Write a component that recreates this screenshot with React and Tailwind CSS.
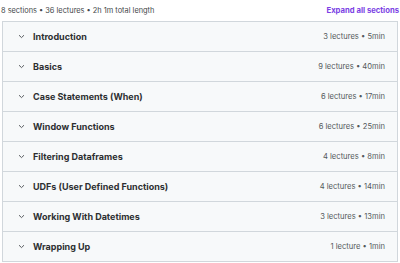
import React from "react";

const sections = [
  ["Introduction", "3 lectures • 5min"],
  ["Basics", "9 lectures • 40min"],
  ["Case Statements (When)", "6 lectures • 17min"],
  ["Window Functions", "6 lectures • 25min"],
  ["Filtering Dataframes", "4 lectures • 8min"],
  ["UDFs (User Defined Functions)", "4 lectures • 14min"],
  ["Working With Datetimes", "3 lectures • 13min"],
  ["Wrapping Up", "1 lecture • 1min"],
];

function Chevron() {
  return (
    <svg width="7" height="5" viewBox="0 0 7 5" fill="none" className="shrink-0">
      <path d="M1 1.2 L3.5 3.6 L6 1.2" stroke="#4a4d50" strokeWidth="0.9" />
    </svg>
  );
}

export default function App() {
  return (
    <div className="w-[400px] h-[263px] bg-white overflow-hidden text-[#2d2f31]" style={{ fontFamily: "Inter, 'Noto Sans', sans-serif" }}>
      <div className="flex items-center justify-between h-[21px] pl-[1px] pr-[1px]">
        <span className="text-[7.4px] text-[#44474a]">8 sections • 36 lectures • 2h 1m total length</span>
        <span className="text-[7.7px] font-bold text-[#7b3fe4]">Expand all sections</span>
      </div>
      <div className="mx-[2px] border border-[#d1d7dc] border-b-0">
        {sections.map(([t, m]) => (
          <div key={t} className="flex items-center h-[30px] bg-[#f7f9fa] border-b border-[#d1d7dc] pl-[15px] pr-[12px]">
            <Chevron />
            <span className="ml-[8px] text-[9px] font-bold flex-1">{t}</span>
            <span className="text-[7.6px] text-[#55595c]">{m}</span>
          </div>
        ))}
      </div>
    </div>
  );
}
